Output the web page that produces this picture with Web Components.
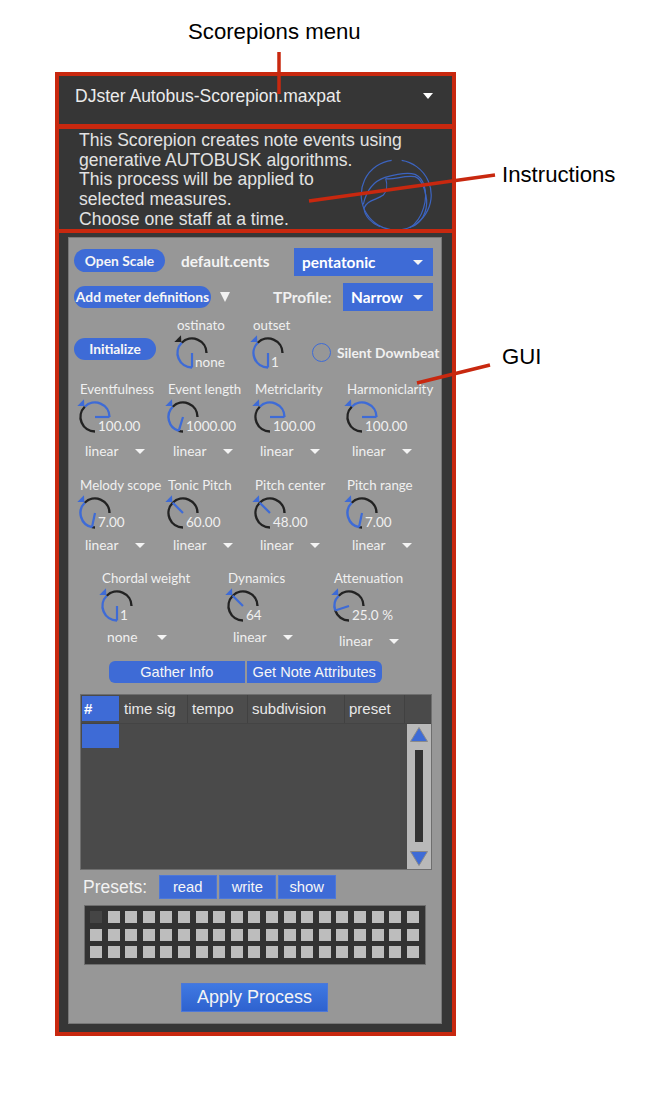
<!DOCTYPE html>
<html>
<head>
<meta charset="utf-8">
<title>Scorepion</title>
<style>
  html, body { margin: 0; background: #fff; }
</style>
</head>
<body>
<scorepion-page></scorepion-page>

<script>
const BLUE = '#3e6bd6';
const UI_FONT = 'Lato, "Liberation Sans", sans-serif';
const HEAD_FONT = '"Liberation Sans", Arial, sans-serif';

class DropMenu extends HTMLElement {
  constructor() {
    super();
    this.attachShadow({ mode: 'open' });
  }

  connectedCallback() {
    this.shadowRoot.innerHTML = `
    <style>
    :host {
      display: flex;
      align-items: center;
      height: 16px;
      width: 60px;
      color: #f0f0f0;
      font: 13.8px/16px ${UI_FONT};
    }
    .arrow {
      margin-left: auto;
      width: 0;
      height: 0;
      border-left: 5px solid transparent;
      border-right: 5px solid transparent;
      border-top: 5px solid #f4f4f4;
    }
    :host([filled]) {
      background: ${BLUE};
      color: #fff;
      font-weight: 700;
      font-size: 15.4px;
      box-sizing: border-box;
      height: 28px;
      padding: 0 10px 0 8px;
    }
    </style>
    <slot></slot><span class="arrow"></span>
    `;
  }
}

class PillButton extends HTMLElement {
  constructor() {
    super();
    this.attachShadow({ mode: 'open' });
  }

  connectedCallback() {
    this.shadowRoot.innerHTML = `
    <style>
    :host {
      display: flex;
      flex: none;
      align-items: center;
      justify-content: center;
      box-sizing: border-box;
      height: 23px;
      border-radius: 12px;
      background: ${BLUE};
      color: #f6f6f6;
      font: 700 13.8px/16px ${UI_FONT};
      white-space: nowrap;
    }
    :host([square]) {
      border-radius: 0;
      height: 24px;
      border: 1px solid #4d78d8;
      font: 400 14.8px/16px ${HEAD_FONT};
    }
    </style>
    <slot></slot>
    `;
  }
}

class ParamKnob extends HTMLElement {
  constructor() {
    super();
    this.attachShadow({ mode: 'open' });
  }

  _point(compass, r) {
    const rad = compass * Math.PI / 180;
    return [15 + r * Math.sin(rad), 15 - r * Math.cos(rad)];
  }

  _arc(from, to) {
    const r = 14.5;
    const [x1, y1] = this._point(from, r);
    const [x2, y2] = this._point(to, r);
    const large = Math.abs(to - from) > 180 ? 1 : 0;
    const sweep = to > from ? 1 : 0;
    return `M${x1.toFixed(2)} ${y1.toFixed(2)}A${r} ${r} 0 ${large} ${sweep} ${x2.toFixed(2)} ${y2.toFixed(2)}`;
  }

  connectedCallback() {
    // angle is measured from the start mark at top left, minus goes round by the left
    const angle = Number(this.getAttribute('angle'));
    const start = -45;
    const end = start + angle;
    const label = this.getAttribute('label');
    const value = this.getAttribute('value');
    const menu = this.getAttribute('menu');
    const markColor = this.hasAttribute('dark-mark') ? '#222' : BLUE;
    const [nx, ny] = this._point(end, 14.5);

    let paths = '';
    if (angle !== 0) {
      paths += `<path d="${this._arc(start, end)}" stroke="${BLUE}"/>`;
    }
    if (angle >= 0) {
      if (angle < 135) paths += `<path d="${this._arc(end, 90)}" stroke="#222"/>`;
      paths += `<path d="${this._arc(start, -180)}" stroke="#222"/>`;
    } else {
      paths += `<path d="${this._arc(start, 90)}" stroke="#222"/>`;
      if (angle > -135) paths += `<path d="${this._arc(end, -180)}" stroke="#222"/>`;
    }

    this.shadowRoot.innerHTML = `
    <style>
    :host {
      display: block;
      flex: none;
      color: #f0f0f0;
      font: 13.3px/16px ${UI_FONT};
    }
    .label { white-space: nowrap; }
    .dial {
      position: relative;
      width: 30px;
      height: 30px;
      margin-top: 5px;
    }
    svg { display: block; overflow: visible; }
    path { fill: none; stroke-width: 2.4; }
    .value {
      position: absolute;
      left: 18px;
      top: 16px;
      font-size: 13.5px;
      white-space: nowrap;
    }
    drop-menu {
      margin: var(--menu-gap, 10px) 0 0 5px;
    }
    </style>
    <div class="label">${label}</div>
    <div class="dial">
      <svg width="30" height="30" viewBox="0 0 30 30">
        ${paths}
        <line x1="15" y1="15" x2="${nx.toFixed(2)}" y2="${ny.toFixed(2)}" stroke="${BLUE}" stroke-width="2.2"/>
        <polygon points="-2.7,4 4.3,4 4,-2.7" fill="${markColor}"/>
      </svg>
      <span class="value">${value}</span>
    </div>
    ${menu ? `<drop-menu>${menu}</drop-menu>` : ''}
    `;
  }
}

class ScoreTable extends HTMLElement {
  constructor() {
    super();
    this.attachShadow({ mode: 'open' });
  }

  connectedCallback() {
    this.shadowRoot.innerHTML = `
    <style>
    :host {
      display: flex;
      flex-direction: column;
      box-sizing: border-box;
      width: 352px;
      height: 176px;
      background: #4a4a4a;
      border: 1px solid #6e6e6e;
      color: #e8e8e8;
      font: 15px/18px ${HEAD_FONT};
    }
    .head {
      display: grid;
      grid-template-columns: 38px 68px 60px 97px 60px;
      height: 28px;
      border-bottom: 1px solid #444;
      padding-left: 1px;
    }
    .head span {
      display: flex;
      align-items: center;
      padding-left: 4px;
      border-right: 1px solid #414141;
      box-sizing: border-box;
      background: #4c4c4c;
    }
    .head span:first-child {
      background: ${BLUE};
      font-weight: 700;
      color: #fff;
      height: 25px;
      margin-top: 1px;
      width: 37px;
      padding-left: 2px;
      border: 0;
    }
    .body { display: flex; flex: 1; padding-left: 1px; }
    .current { width: 37px; height: 24px; background: ${BLUE}; }
    .scroll {
      margin-left: auto;
      width: 24px;
      background: #b9b9b9;
      display: flex;
      flex-direction: column;
      align-items: center;
      padding: 3px 0;
      box-sizing: border-box;
    }
    .track { flex: 1; width: 8px; margin: 8px 0 9px; background: #333; }
    svg { display: block; }
    </style>
    <div class="head">
      <span>#</span><span>time sig</span><span>tempo</span><span>subdivision</span><span>preset</span>
    </div>
    <div class="body">
      <div class="current"></div>
      <div class="scroll">
        <svg width="18" height="15" viewBox="0 0 18 15"><polygon points="9,0.5 17.5,14.5 0.5,14.5" fill="${BLUE}" stroke="#8a8a8a"/></svg>
        <div class="track"></div>
        <svg width="18" height="15" viewBox="0 0 18 15"><polygon points="0.5,0.5 17.5,0.5 9,14.5" fill="${BLUE}" stroke="#8a8a8a"/></svg>
      </div>
    </div>
    `;
  }
}

class PresetGrid extends HTMLElement {
  constructor() {
    super();
    this.attachShadow({ mode: 'open' });
  }

  connectedCallback() {
    let cells = '';
    for (let i = 0; i < 57; i++) {
      cells += `<i class="${i === 0 ? 'off' : ''}"></i>`;
    }
    this.shadowRoot.innerHTML = `
    <style>
    :host {
      display: grid;
      grid-template-columns: repeat(19, 12px);
      grid-auto-rows: 12px;
      column-gap: 5.6px;
      row-gap: 5.7px;
      box-sizing: border-box;
      width: 342px;
      height: 60px;
      padding: 5px 5px;
      background: #333;
      border: 1px solid #6e6e6e;
    }
    i { background: #bdbdbd; }
    i.off { background: #454545; }
    </style>
    ${cells}
    `;
  }
}

class GuiPanel extends HTMLElement {
  constructor() {
    super();
    this.attachShadow({ mode: 'open' });
  }

  connectedCallback() {
    this.shadowRoot.innerHTML = `
    <style>
    :host {
      display: block;
      box-sizing: border-box;
      height: 787px;
      padding: 10px 8px 0 5px;
      background: #979797;
      border: 1px solid #777;
      color: #f0f0f0;
      font: 13px/16px ${UI_FONT};
    }
    .row { display: flex; align-items: center; }
    .row-a { height: 28px; }
    .row-a pill-button { margin-top: -3px; }
    .row-b { height: 28px; margin-top: 7px; }
    .file { margin: -3px 0 0 16px; font-weight: 700; font-size: 15.4px; color: #f4f4f4; }
    .big-arrow {
      width: 0;
      height: 0;
      margin-left: 9px;
      border-left: 5.5px solid transparent;
      border-right: 5.5px solid transparent;
      border-top: 10px solid #f2f2f2;
    }
    .tprofile { margin-left: 43px; font-weight: 700; font-size: 15.5px; }
    .push { margin-left: auto; }
    .row-c { align-items: flex-start; margin-top: 6px; height: 51px; }
    .row-c pill-button { width: 82px; height: 22px; margin-top: 21px; }
    .ostinato { margin-left: 21px; width: 76px; }
    .outset { width: 59px; }
    .silent { display: flex; flex: none; align-items: center; margin-top: 26px; font-weight: 700; font-size: 13.8px; white-space: nowrap; }
    .ring {
      box-sizing: border-box;
      width: 19px;
      height: 19px;
      margin-right: 6px;
      border: 1.5px solid ${BLUE};
      border-radius: 50%;
    }
    .knobs {
      display: grid;
      margin-left: 6px;
      grid-template-columns: 88px 87px 92px auto;
    }
    .knobs-1 { margin-top: 13px; --menu-gap: 11px; }
    .knobs-2 { margin-top: 18px; --menu-gap: 9px; }
    .knobs-3 {
      margin: 17px 0 0 28px;
      grid-template-columns: 126px 106px auto;
      --menu-gap: 8px;
    }
    .knobs-3 param-knob:last-child { --menu-gap: 12px; }
    .gather { margin: 12px 0 0 35px; }
    .gather pill-button {
      width: 135.5px;
      height: 22px;
      font-weight: 400;
      font-size: 14.6px;
      font-family: ${HEAD_FONT};
    }
    .gather pill-button:first-child { border-radius: 6px 0 0 6px; margin-right: 2px; }
    .gather pill-button:last-child { border-radius: 0 6px 6px 0; }
    score-table { margin: 11px 0 0 6px; }
    .presets { margin: 5px 0 0 9px; }
    .presets-label { width: 76px; font: 17.5px/20px ${HEAD_FONT}; color: #f2f2f2; }
    .presets pill-button { width: 57.5px; margin-right: 2px; }
    preset-grid { margin: 6px 0 0 10px; }
    .apply {
      display: block;
      box-sizing: border-box;
      width: 147px;
      height: 29px;
      margin: 18px 0 0 107px;
      background: linear-gradient(#4079e2, #2e62cf);
      border: 1px solid #4d78d8;
      color: #f4f4f4;
      font: 18px/27px ${HEAD_FONT};
      text-align: center;
    }
    </style>
    <div class="row row-a">
      <pill-button style="width:91px">Open Scale</pill-button>
      <span class="file">default.cents</span>
      <drop-menu class="push" filled style="width:139px">pentatonic</drop-menu>
    </div>
    <div class="row row-b">
      <pill-button style="width:137px;height:22px">Add meter definitions</pill-button>
      <span class="big-arrow"></span>
      <span class="tprofile">TProfile:</span>
      <drop-menu class="push" filled style="width:90px">Narrow</drop-menu>
    </div>
    <div class="row row-c">
      <pill-button>Initialize</pill-button>
      <param-knob class="ostinato" label="ostinato" value="none" angle="-135" dark-mark></param-knob>
      <param-knob class="outset" label="outset" value="1" angle="-135"></param-knob>
      <div class="silent"><span class="ring"></span>Silent Downbeat</div>
    </div>
    <div class="knobs knobs-1">
      <param-knob label="Eventfulness" value="100.00" angle="135" menu="linear"></param-knob>
      <param-knob label="Event length" value="1000.00" angle="-118" menu="linear"></param-knob>
      <param-knob label="Metriclarity" value="100.00" angle="135" menu="linear"></param-knob>
      <param-knob label="Harmoniclarity" value="100.00" angle="135" menu="linear"></param-knob>
    </div>
    <div class="knobs knobs-2">
      <param-knob label="Melody scope" value="7.00" angle="-123" menu="linear"></param-knob>
      <param-knob label="Tonic Pitch" value="60.00" angle="0" menu="linear"></param-knob>
      <param-knob label="Pitch center" value="48.00" angle="0" menu="linear"></param-knob>
      <param-knob label="Pitch range" value="7.00" angle="-123" menu="linear"></param-knob>
    </div>
    <div class="knobs knobs-3">
      <param-knob label="Chordal weight" value="1" angle="-135" menu="none"></param-knob>
      <param-knob label="Dynamics" value="64" angle="0" menu="linear"></param-knob>
      <param-knob label="Attenuation" value="25.0 %" angle="-63" menu="linear"></param-knob>
    </div>
    <div class="row gather">
      <pill-button>Gather Info</pill-button>
      <pill-button>Get Note Attributes</pill-button>
    </div>
    <score-table></score-table>
    <div class="row presets">
      <span class="presets-label">Presets:</span>
      <pill-button square>read</pill-button>
      <pill-button square>write</pill-button>
      <pill-button square>show</pill-button>
    </div>
    <preset-grid></preset-grid>
    <div class="apply">Apply Process</div>
    `;
  }
}

class ScorepionFrame extends HTMLElement {
  constructor() {
    super();
    this.attachShadow({ mode: 'open' });
  }

  connectedCallback() {
    this.shadowRoot.innerHTML = `
    <style>
    :host {
      display: block;
      box-sizing: border-box;
      width: 401px;
      height: 964px;
      margin-left: 55px;
      background: #c8280f;
      border: 4px solid #c8280f;
      font-family: ${HEAD_FONT};
    }
    .menu {
      display: flex;
      align-items: center;
      box-sizing: border-box;
      height: 48px;
      padding: 0 19px 8px 16px;
      background: #363636;
      color: #ececec;
      font-size: 17.5px;
    }
    .arrow {
      margin-left: auto;
      width: 0;
      height: 0;
      border-left: 5.5px solid transparent;
      border-right: 5.5px solid transparent;
      border-top: 6px solid #fff;
    }
    .info {
      position: relative;
      overflow: hidden;
      box-sizing: border-box;
      height: 100px;
      margin-top: 5px;
      padding: 2px 0 0 20px;
      background: #363636;
      color: #e2e2e2;
      font-size: 17.6px;
      line-height: 19.7px;
    }
    .logo { position: absolute; left: 291px; top: 16px; }
    .gui {
      box-sizing: border-box;
      height: 799px;
      margin-top: 4px;
      padding: 4px 10px 8px 9px;
      background: #363636;
    }
    </style>
    <div class="menu">DJster Autobus-Scorepion.maxpat<span class="arrow"></span></div>
    <div class="info">
      This Scorepion creates note events using<br>
      generative AUTOBUSK algorithms.<br>
      This process will be applied to<br>
      selected measures.<br>
      Choose one staff at a time.
      <svg class="logo" width="90" height="90" viewBox="0 0 270 270" fill="none" stroke="#3c64c0" stroke-width="3.6">
        <path d="M125 46A105 105 0 1 0 155 46.4"/>
        <path d="M40 178C50 132 75 107 105 97C130 90 170 80 195 88C205 92 215 100 222 120C235 160 220 220 180 248"/>
        <path d="M107 100C113 120 110 140 100 150C80 165 50 165 42 190C45 215 65 235 90 245"/>
        <path d="M108 101C130 106 160 90 195 95C210 100 225 125 230 165C232 200 215 235 185 245"/>
      </svg>
    </div>
    <div class="gui"><gui-panel></gui-panel></div>
    `;
  }
}

class ScorepionPage extends HTMLElement {
  constructor() {
    super();
    this.attachShadow({ mode: 'open' });
  }

  connectedCallback() {
    this.shadowRoot.innerHTML = `
    <style>
    :host {
      display: block;
      position: relative;
      width: 645px;
      height: 1098px;
      overflow: hidden;
      background: #fff;
      color: #000;
      font: 22.2px/24px ${HEAD_FONT};
    }
    .title { height: 72px; padding: 20px 0 0 188px; box-sizing: border-box; }
    .note { position: absolute; }
    .lines { position: absolute; left: 0; top: 0; pointer-events: none; }
    </style>
    <div class="title">Scorepions menu</div>
    <scorepion-frame></scorepion-frame>
    <span class="note" style="left:502px;top:163px">Instructions</span>
    <span class="note" style="left:502px;top:345px">GUI</span>
    <svg class="lines" width="645" height="1098" stroke="#c8280f" stroke-width="3.5">
      <line x1="279" y1="52" x2="279" y2="94"/>
      <line x1="309" y1="201" x2="495" y2="175"/>
      <line x1="417" y1="383" x2="490" y2="365"/>
    </svg>
    `;
  }
}

customElements.define('drop-menu', DropMenu);
customElements.define('pill-button', PillButton);
customElements.define('param-knob', ParamKnob);
customElements.define('score-table', ScoreTable);
customElements.define('preset-grid', PresetGrid);
customElements.define('gui-panel', GuiPanel);
customElements.define('scorepion-frame', ScorepionFrame);
customElements.define('scorepion-page', ScorepionPage);
</script>
</body>
</html>
